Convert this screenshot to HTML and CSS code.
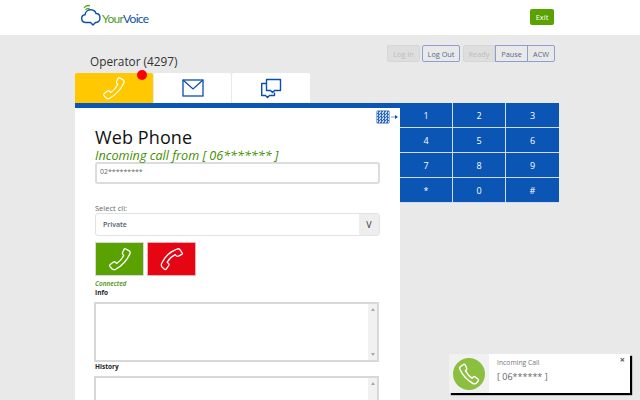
FILE: index.html
```html
<!DOCTYPE html>
<html lang="en">
<head>
    <meta charset="UTF-8">
    <title>YourVoice Web Phone</title>
    <link rel="stylesheet" href="styles.css">
</head>
<body>
    <div class="header">
        <div class="logo">
            <svg class="logo-cloud" width="21" height="23" viewBox="0 0 21 23" fill="none">
                <path d="M3 4C4.500 1.800 7 1.200 9 1.800M4.500 6C5.500 4.500 7 4 8.500 4.500" stroke="#5aa51e" stroke-width="1.300"/>
                <path d="M5 18.500C2 18.500 .7 16.500 .7 14.500C.7 12.500 2 11 4 10.800C4.500 7.500 7 5.500 10 5.800C13 6 14.500 7.500 15 9.500C17.500 9.500 19 11.500 19 14C19 16.500 17 18.500 15 18.500L14.500 18.500L12 21L9.500 18.500Z" stroke="#0b4fae" stroke-width="1.400" fill="#fff"/>
            </svg>
            <span class="logo-text"><span class="logo-your">Your</span><span class="logo-voice">Voice</span></span>
        </div>
        <button class="exit-btn">Exit</button>
    </div>

    <div class="main">
        <div class="top-row">
            <div class="operator">Operator (4297)</div>
            <div class="status-btns">
                <button class="status-btn login disabled">Log In</button>
                <button class="status-btn logout">Log Out</button>
                <div class="btn-group">
                    <button class="status-btn ready disabled">Ready</button>
                    <button class="status-btn pause">Pause</button>
                    <button class="status-btn acw">ACW</button>
                </div>
            </div>
        </div>

        <div class="tabs">
            <div class="tab active">
                <svg width="26" height="26" viewBox="0 0 24 24" fill="none" stroke="#fff" stroke-width="1.100" stroke-linejoin="round">
                    <path d="M17 2.500L20.500 4.500C21.500 5.200 21.500 6.500 21 7.500C18.500 13 14 18 8 21.500C6.800 22 5.500 22 4.500 21L2.800 19C2.300 18.300 2.500 17.500 3 17L6 14.800C6.700 14.400 7.400 14.500 7.800 15L9 16.200C11.500 14.500 14 11.500 15.500 8.800L14.500 7.500C14.100 7 14.200 6.300 14.500 5.800L15.800 3C16.100 2.400 16.600 2.300 17 2.500Z"/>
                </svg>
                <span class="tab-dot"></span>
            </div>
            <div class="tab">
                <svg width="22" height="18" viewBox="0 0 22 18" fill="none" stroke="#0b4fae" stroke-width="1.300">
                    <rect x="1" y="1" width="20" height="16"/>
                    <path d="M1 1L11 10L21 1"/>
                </svg>
            </div>
            <div class="tab">
                <svg width="21" height="21" viewBox="0 0 21 21" fill="none" stroke="#0b4fae" stroke-width="1.400" stroke-linejoin="round">
                    <path d="M5.500 1.500H19.500V12.500H13.500L11.500 14.500L9.500 12.500H5.500Z"/>
                    <path d="M5.500 5.500H.7V17.500H4.500L6.500 19.500L8.500 17.500H13.500V14.500"/>
                </svg>
            </div>
        </div>

        <div class="phone-row">
            <div class="panel">
                <div class="keypad-toggle">
                    <span class="keypad-icon"></span>
                    <svg width="7" height="6" viewBox="0 0 7 6"><path d="M0 3H4" stroke="#7a9bd0" stroke-width="1"/><path d="M4 1L7 3L4 5Z" fill="#0b4fae"/></svg>
                </div>
                <h1 class="title">Web Phone</h1>
                <div class="incoming">Incoming call from [ 06******* ]</div>
                <div class="number-input">02*********</div>
                <label class="field-label">Select cli:</label>
                <div class="select">
                    <span class="select-value">Private</span>
                    <span class="select-arrow">V</span>
                </div>
                <div class="call-btns">
                    <button class="call-btn answer">
                        <svg width="26" height="26" viewBox="0 0 24 24" fill="none" stroke="#fff" stroke-width="1.200" stroke-linejoin="round">
                            <path d="M17 2.500L20.500 4.500C21.500 5.200 21.500 6.500 21 7.500C18.500 13 14 18 8 21.500C6.800 22 5.500 22 4.500 21L2.800 19C2.300 18.300 2.500 17.500 3 17L6 14.800C6.700 14.400 7.400 14.500 7.800 15L9 16.200C11.500 14.500 14 11.500 15.500 8.800L14.500 7.500C14.100 7 14.200 6.300 14.500 5.800L15.800 3C16.100 2.400 16.600 2.300 17 2.500Z"/>
                        </svg>
                    </button>
                    <button class="call-btn hangup">
                        <svg width="26" height="26" viewBox="0 0 24 24" fill="none" stroke="#fff" stroke-width="1.200" stroke-linejoin="round">
                            <path d="M21.500 6.500L19.500 3.500C18.800 2.600 17.500 2.400 16.500 2.800C10.500 5 5.500 9.500 2.500 16C2 17.200 2 18.500 2.800 19.500L4.800 21.300C5.500 21.800 6.300 21.700 6.800 21.200L9 18C9.400 17.300 9.300 16.600 8.800 16.200L7.500 15C9 12.300 11.800 9.500 15 8L16.200 9.300C16.700 9.700 17.400 9.700 18 9.300L21 7.800C21.600 7.500 21.800 7 21.500 6.500Z"/>
                        </svg>
                    </button>
                </div>
                <div class="connected">Connected</div>
                <label class="info-label">Info</label>
                <div class="textbox">
                    <div class="scrollbar"><span class="arrow-up"></span><span class="arrow-down"></span></div>
                </div>
                <label class="info-label">History</label>
                <div class="textbox">
                    <div class="scrollbar"><span class="arrow-up"></span><span class="arrow-down"></span></div>
                </div>
            </div>

            <div class="keypad">
                <div class="key">1</div>
                <div class="key">2</div>
                <div class="key">3</div>
                <div class="key">4</div>
                <div class="key">5</div>
                <div class="key">6</div>
                <div class="key">7</div>
                <div class="key">8</div>
                <div class="key">9</div>
                <div class="key">*</div>
                <div class="key">0</div>
                <div class="key">#</div>
            </div>
        </div>
    </div>

    <div class="toast">
        <div class="toast-icon">
            <span class="toast-circle">
                <svg width="24" height="24" viewBox="0 0 24 24" fill="none" stroke="#fff" stroke-width="1.500" stroke-linejoin="round">
                    <path d="M6.500 2.500L3.500 4.500C2.500 5.200 2.500 6.500 3 7.500C5.500 13 10 18 16 21.500C17.200 22 18.500 22 19.500 21L21.200 19C21.700 18.300 21.500 17.500 21 17L18 14.800C17.300 14.400 16.600 14.500 16.200 15L15 16.200C12.500 14.500 10 11.500 8.500 8.800L9.500 7.500C9.900 7 9.800 6.300 9.500 5.800L8.200 3C7.900 2.400 7 2.200 6.500 2.500Z"/>
                </svg>
            </span>
        </div>
        <div class="toast-body">
            <div class="toast-title">Incoming Call</div>
            <div class="toast-number">[ 06****** ]</div>
        </div>
        <span class="toast-close">×</span>
    </div>
</body>
</html>
```

FILE: styles.css
```css
:root {
    --blue: #0b55b5;
    --green: #5aa202;
    --page: #e9e9e9;
}

* {
    margin: 0;
    padding: 0;
    box-sizing: border-box;
}

html, body {
    height: 400px;
    overflow: hidden;
}

body {
    background: var(--page);
    font-family: "Open Sans", sans-serif;
    color: #222;
}

button {
    font-family: inherit;
}

.header {
    height: 35px;
    background: white;
    display: flex;
    align-items: flex-start;
    justify-content: space-between;
    padding: 4px 86px 0 81px;
}

.logo {
    display: flex;
    align-items: flex-end;
    height: 23px;
}

.logo-cloud {
    display: block;
}

.logo-text {
    font-family: "Lato", sans-serif;
    font-size: 12px;
    line-height: 12px;
    letter-spacing: -0.7px;
    margin-bottom: 2px;
}

.logo-your {
    color: #4f9d1c;
}

.logo-voice {
    color: #0b4fae;
}

.exit-btn {
    width: 24px;
    height: 16px;
    margin-top: 5px;
    background: var(--green);
    color: white;
    border: none;
    border-radius: 2px;
    font-size: 7.500px;
    font-weight: 400;
}

.main {
    width: 484px;
    margin-left: 75px;
}

.top-row {
    height: 38px;
    display: flex;
    justify-content: space-between;
    padding: 10px 4px 0 15px;
}

.operator {
    font-size: 11.800px;
    line-height: 17px;
    padding-top: 8px;
    color: #333;
}

.status-btns {
    display: flex;
    gap: 2px;
    height: 17px;
}

.btn-group {
    display: flex;
    margin-left: 1px;
}

.status-btn {
    height: 17px;
    padding: 0;
    background: transparent;
    border: 1px solid #8ba0d0;
    border-radius: 2px;
    font-size: 7.300px;
    color: #55698a;
}

.status-btn.login {
    width: 33px;
}

.status-btn.logout {
    width: 38px;
}

.btn-group .status-btn {
    border-radius: 0;
}

.status-btn.ready {
    width: 32px;
    border-radius: 2px 0 0 2px;
}

.status-btn.pause {
    width: 33px;
}

.status-btn.acw {
    width: 28px;
    margin-left: -1px;
    border-radius: 0 2px 2px 0;
}

.status-btn.disabled {
    background: #dedede;
    border-color: #d6d6d6;
    color: #bcbcbc;
}

.tabs {
    width: 235px;
    height: 30px;
    display: flex;
    gap: 1px;
}

.tab {
    position: relative;
    flex: 1;
    background: white;
    border-radius: 2px 2px 0 0;
    display: flex;
    align-items: center;
    justify-content: center;
}

.tab.active {
    background: #ffc800;
}

.tab-dot {
    position: absolute;
    top: -3px;
    right: 6px;
    width: 10px;
    height: 10px;
    border-radius: 50%;
    background: #f00;
}

.phone-row {
    display: flex;
    align-items: flex-start;
}

.panel {
    position: relative;
    width: 325px;
    height: 297px;
    overflow: hidden;
    background: white;
    border-top: 5px solid var(--blue);
    padding: 17px 20px 0;
}

.keypad-toggle {
    position: absolute;
    top: 2px;
    right: 2px;
    display: flex;
    align-items: center;
    gap: 1px;
}

.keypad-icon {
    width: 14px;
    height: 14px;
    border: 1px solid #9ab3dd;
    border-radius: 2px;
    background: repeating-conic-gradient(#2a68c2 0 25%, #c5d6f0 0 50%) 0 0 / 3px 3px;
}

.title {
    font-size: 18px;
    font-weight: 400;
    line-height: 24px;
    color: #111;
    letter-spacing: 0.1px;
}

.incoming {
    font-size: 12.600px;
    font-style: italic;
    line-height: 13px;
    color: #3f8f00;
}

.number-input {
    height: 22px;
    width: 285px;
    border: 2px solid #dcdcdc;
    border-radius: 3px;
    padding: 0 3px;
    font-size: 7px;
    line-height: 16px;
    color: #666;
}

.field-label {
    display: block;
    margin-top: 19px;
    font-size: 7.500px;
    line-height: 10px;
    color: #666;
}

.select {
    height: 23px;
    width: 285px;
    border: 1px solid #e2e2e2;
    border-radius: 3px;
    display: flex;
    align-items: center;
    justify-content: space-between;
    overflow: hidden;
}

.select-value {
    font-size: 7px;
    font-weight: 600;
    color: #55606f;
    padding-left: 7px;
}

.select-arrow {
    width: 20px;
    height: 100%;
    background: #eee;
    font-size: 9px;
    color: #333;
    display: flex;
    align-items: center;
    justify-content: center;
}

.call-btns {
    display: flex;
    gap: 3px;
    margin-top: 6px;
}

.call-btn {
    width: 49px;
    height: 34px;
    border: 1px solid #d8d8d8;
    display: flex;
    align-items: center;
    justify-content: center;
}

.call-btn.answer {
    background: var(--green);
}

.call-btn.hangup {
    background: #e60513;
    border-color: #f4b0b0;
}

.connected {
    margin-top: 3px;
    font-size: 6.500px;
    font-style: italic;
    font-weight: 600;
    line-height: 9px;
    color: #3f8f00;
}

.info-label {
    display: block;
    font-size: 6.500px;
    font-weight: 700;
    line-height: 9px;
    color: #222;
    margin-bottom: 5px;
}

.textbox {
    width: 285px;
    margin-left: -1px;
    height: 60px;
    border: 2px solid #d8d8d8;
    display: flex;
    justify-content: flex-end;
    flex-shrink: 0;
}

.scrollbar {
    width: 9px;
    background: #f1f1f1;
    display: flex;
    flex-direction: column;
    justify-content: space-between;
    align-items: center;
    padding: 4px 0;
}

.arrow-up {
    border-left: 2px solid transparent;
    border-right: 2px solid transparent;
    border-bottom: 3px solid #aaa;
}

.arrow-down {
    border-left: 2px solid transparent;
    border-right: 2px solid transparent;
    border-top: 3px solid #aaa;
}

.keypad {
    width: 159px;
    display: grid;
    grid-template-columns: repeat(3, 1fr);
    grid-auto-rows: 25px;
    background: var(--blue);
}

.key {
    color: white;
    font-size: 9px;
    display: flex;
    align-items: center;
    justify-content: center;
    border-right: 1px solid #cfdcf2;
    border-bottom: 1px solid #cfdcf2;
}

.key:nth-child(3n) {
    border-right: none;
}

.toast {
    position: absolute;
    left: 449px;
    top: 354px;
    width: 181px;
    height: 39px;
    background: white;
    box-shadow: 2px 2px 1px #000;
    display: flex;
}

.toast-icon {
    width: 40px;
    background: #f1f1f1;
    display: flex;
    align-items: center;
    justify-content: center;
}

.toast-circle {
    width: 32px;
    height: 32px;
    border-radius: 50%;
    background: #8cbe3f;
    display: flex;
    align-items: center;
    justify-content: center;
}

.toast-body {
    padding: 3px 0 0 8px;
}

.toast-title {
    font-size: 6.800px;
    line-height: 12px;
    color: #777;
}

.toast-number {
    font-size: 9px;
    line-height: 14px;
    margin-top: 1px;
    color: #666;
}

.toast-close {
    position: absolute;
    top: 1px;
    right: 5px;
    font-size: 9px;
    line-height: 10px;
    font-weight: 700;
    color: #555;
}
```
